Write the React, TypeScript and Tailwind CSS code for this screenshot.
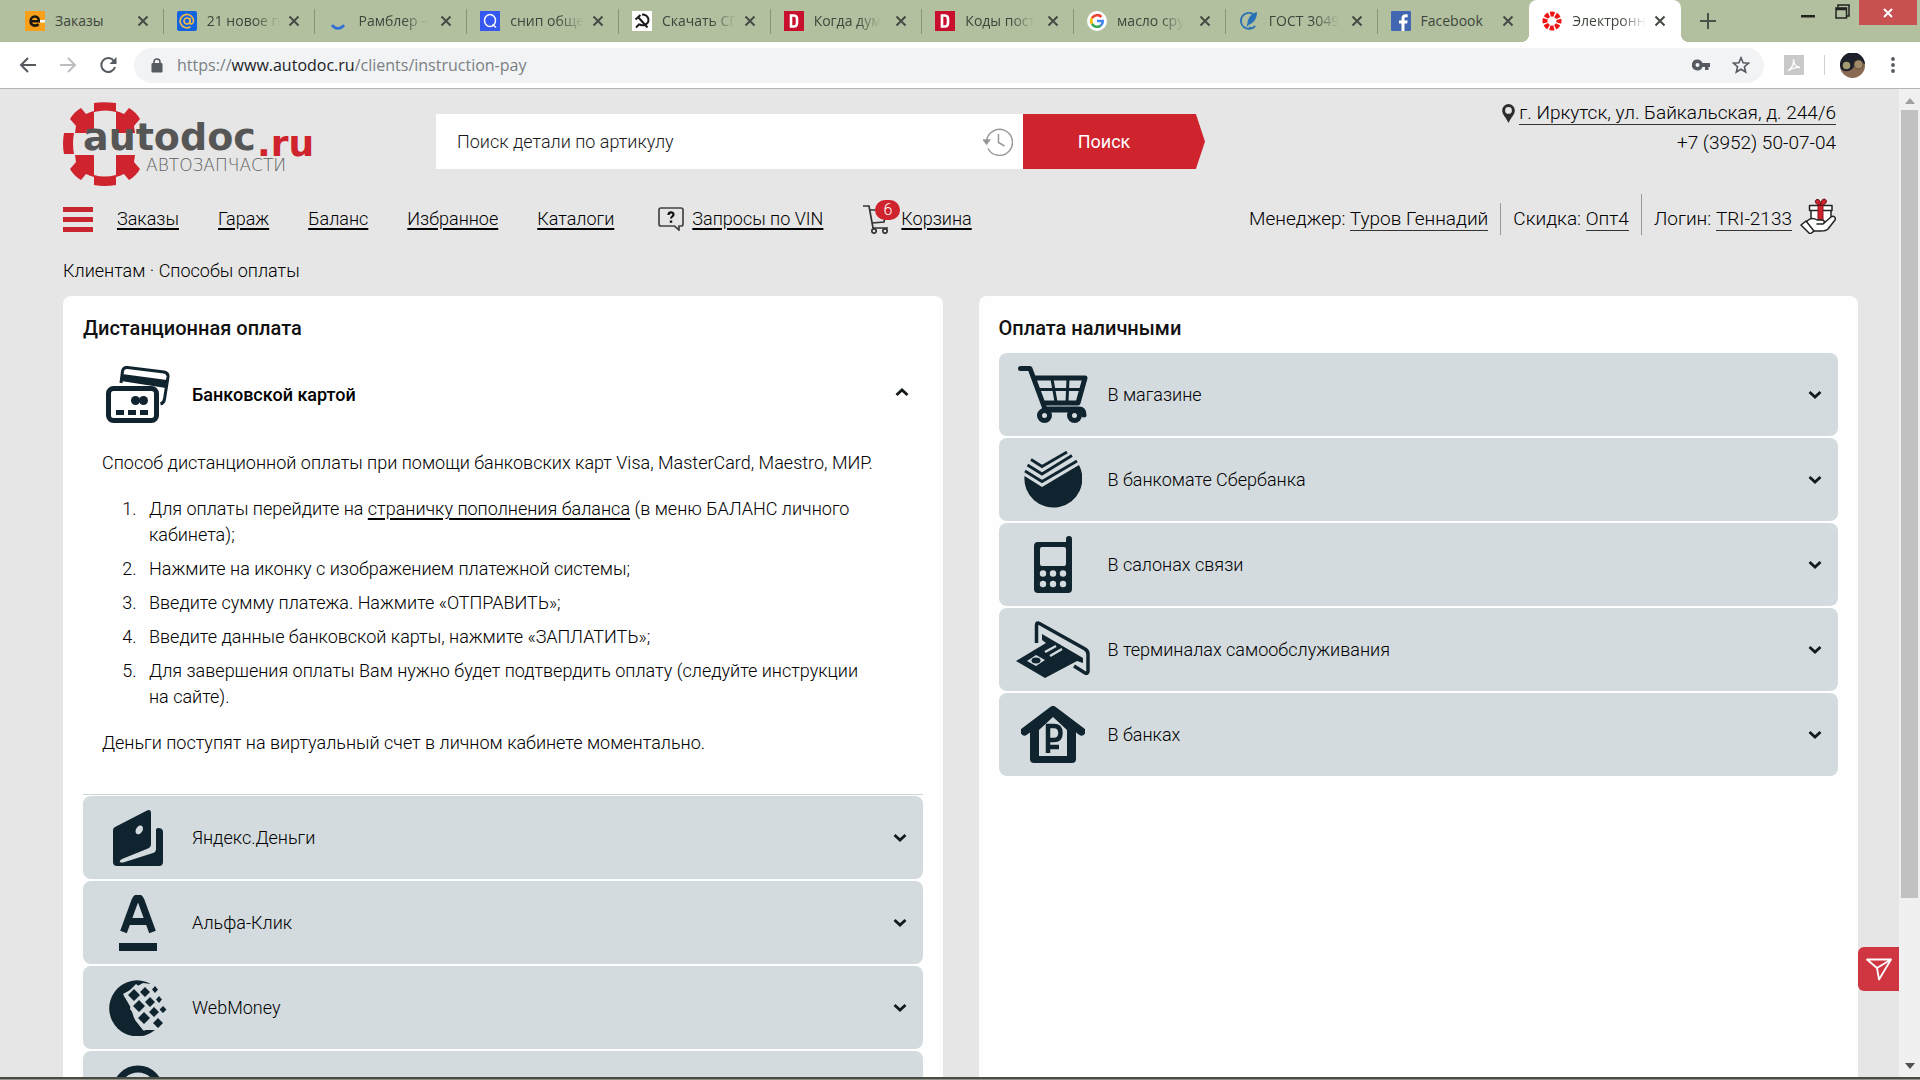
import { useState, type ReactNode } from "react";

const INK = "#10242f";

/* ---------- browser chrome ---------- */

function AutodocFavicon() {
  return (
    <svg viewBox="0 0 20 20" className="size-5">
      <circle cx="10" cy="10" r="7" fill="none" stroke="#f01414" strokeWidth="5" strokeDasharray="4.1 1.4" strokeDashoffset="2" />
    </svg>
  );
}

const favicons: Record<string, ReactNode> = {
  e: (
    <svg viewBox="0 0 20 20" className="size-5">
      <rect width="20" height="20" fill="#f9a01b" />
      <path d="M5.500 10.300h8.300c.2-3-1.500-4.800-3.900-4.800-2.500 0-4.300 1.900-4.300 4.600 0 2.900 1.800 4.500 4.400 4.500 1.500 0 2.700-.5 3.500-1.500" fill="none" stroke="#1c1a10" strokeWidth="2.600" />
      <rect x="15" y="9" width="5" height="2.500" fill="#fff" />
    </svg>
  ),
  mail: (
    <svg viewBox="0 0 20 20" className="size-5">
      <rect width="20" height="20" rx="2" fill="#1263e0" />
      <g fill="none" stroke="#e9b64c" strokeWidth="1.700">
        <circle cx="10" cy="10" r="3" />
        <path d="M13 7v4.500c0 2.200 3.500 2 3.500-1.500A6.700 6.700 0 1 0 13.500 15.700" />
      </g>
    </svg>
  ),
  spinner: (
    <svg viewBox="0 0 20 20" className="size-5">
      <path d="M4 14c3 4.500 9 4.500 12 0" fill="none" stroke="#2f6fd6" strokeWidth="2.500" />
    </svg>
  ),
  search: (
    <svg viewBox="0 0 20 20" className="size-5">
      <rect width="20" height="20" fill="#3558f0" />
      <ellipse cx="10" cy="9.500" rx="5.500" ry="6" fill="none" stroke="#fff" strokeWidth="1.500" />
      <path d="M12.500 13.500l3.500 3" stroke="#fff" strokeWidth="1.500" />
    </svg>
  ),
  hammer: (
    <svg viewBox="0 0 20 20" className="size-5">
      <rect width="20" height="20" fill="#fff" />
      <path d="M10 3.500c7 0 8.500 7.500 3.500 10-2.500 1.300-5 .8-6.500-.5M4 16.500l3.500-3.500M3.500 8.500l5-4.500M6.500 6.500l9 10" fill="none" stroke="#1b1b1b" strokeWidth="2" />
    </svg>
  ),
  d: (
    <svg viewBox="0 0 20 20" className="size-5">
      <rect width="20" height="20" fill="#c8102e" />
      <path d="M7 4.500h3c2.500 0 3 1.500 3 3.500v4c0 2-.5 3.500-3 3.500H7z" fill="none" stroke="#fff" strokeWidth="2.600" />
    </svg>
  ),
  google: (
    <svg viewBox="0 0 20 20" className="size-5">
      <circle cx="10" cy="10" r="10" fill="#fff" />
      <g fill="none" strokeWidth="2.600">
        <path d="M14.400 6A5.800 5.800 0 0 0 5 7.200" stroke="#ea4335" />
        <path d="M5 7.200a5.800 5.800 0 0 0 0 5.600" stroke="#fbbc05" />
        <path d="M5 12.800a5.800 5.800 0 0 0 8.800 1.600" stroke="#34a853" />
        <path d="M13.800 14.400A5.800 5.800 0 0 0 15.800 10H10" stroke="#4285f4" />
      </g>
    </svg>
  ),
  quill: (
    <svg viewBox="0 0 20 20" className="size-5">
      <path d="M16 15A8 8 0 1 1 14 3" fill="none" stroke="#2a72b5" strokeWidth="1.800" />
      <path d="M18 1C13 2 9 6 8.500 12l-1 4 3.500-3c4-1 7-6 7-12z" fill="#2a72b5" />
      <path d="M10 16c3 2 5 1 6-1" fill="none" stroke="#2a72b5" strokeWidth="1.500" />
    </svg>
  ),
  facebook: (
    <svg viewBox="0 0 20 20" className="size-5">
      <rect width="20" height="20" rx="1" fill="#4267b2" />
      <path d="M13.500 20v-7.500h2.700l.4-3h-3.100V7.700c0-.9.400-1.500 1.600-1.500h1.600V3.400c-3.500-.6-6.200.3-6.200 3.900v2.200H8v3h2.500V20z" fill="#fff" />
    </svg>
  ),
  autodoc: <AutodocFavicon />,
};

const tabs = [
  { icon: "e", title: "Заказы" },
  { icon: "mail", title: "21 новое п" },
  { icon: "spinner", title: "Рамблер –" },
  { icon: "search", title: "снип обще" },
  { icon: "hammer", title: "Скачать СГ" },
  { icon: "d", title: "Когда дум" },
  { icon: "d", title: "Коды пост" },
  { icon: "google", title: "масло сру" },
  { icon: "quill", title: "ГОСТ 3049" },
  { icon: "facebook", title: "Facebook" },
  { icon: "autodoc", title: "Электронн" },
];

function Cross() {
  return (
    <svg viewBox="0 0 12 12" className="size-3">
      <path d="M1.500 1.500l9 9M10.500 1.500l-9 9" stroke="#454a45" strokeWidth="2" />
    </svg>
  );
}

function TabStrip() {
  return (
    <div className="flex h-[42px] shrink-0 bg-[#b2c09f] font-['Open_Sans',sans-serif]">
      <div className="grid min-w-0 flex-1 grid-cols-11 pl-3">
        {tabs.map((tab, i) => {
          const active = i === tabs.length - 1;
          return (
            <div
              key={i}
              className={
                active
                  ? "relative flex min-w-0 items-center rounded-t-lg bg-white pl-[13px]"
                  : "flex min-w-0 items-center pl-[13px]"
              }
            >
              {active && (
                <>
                  <span className="absolute bottom-0 -left-2 size-2 bg-[radial-gradient(circle_at_0_0,transparent_8px,white_8px)]" />
                  <span className="absolute -right-2 bottom-0 size-2 bg-[radial-gradient(circle_at_100%_0,transparent_8px,white_8px)]" />
                </>
              )}
              <span className="shrink-0">{favicons[tab.icon]}</span>
              <span
                className={
                  tab.title.length > 8
                    ? "ml-2.5 max-w-20 shrink-0 mask-r-from-65% mask-r-to-100% text-sm whitespace-nowrap text-[#3e453c]"
                    : "ml-2.5 shrink-0 text-sm whitespace-nowrap text-[#3e453c]"
                }
              >
                {tab.title}
              </span>
              <button type="button" aria-label={"Закрыть " + tab.title} className="mr-3.5 ml-auto shrink-0">
                <Cross />
              </button>
              <span className={i >= tabs.length - 2 ? "w-px shrink-0" : "h-[25px] w-px shrink-0 bg-[#87927b]"} />
            </div>
          );
        })}
      </div>
      <div className="flex w-[239px] shrink-0 items-start justify-between pr-[3px] pl-[19px]">
        <button type="button" aria-label="Новая вкладка" className="mt-[13px]">
          <svg viewBox="0 0 16 16" className="size-4">
            <path d="M8 0v16M0 8h16" stroke="#4a5147" strokeWidth="2" />
          </svg>
        </button>
        <div className="flex items-start">
          <button type="button" aria-label="Свернуть" className="mt-[15px] mr-5">
            <svg viewBox="0 0 14 3" className="h-[3px] w-3.5">
              <rect width="14" height="2.500" fill="#222" />
            </svg>
          </button>
          <button type="button" aria-label="Развернуть" className="mt-1 mr-[9px]">
            <svg viewBox="0 0 15 15" className="size-[15px]">
              <path d="M3 3V1h11v11h-2" fill="none" stroke="#222" strokeWidth="1.500" />
              <rect x="1" y="4" width="10.500" height="10" fill="none" stroke="#222" strokeWidth="1.500" />
              <path d="M1 5h10.500" stroke="#222" strokeWidth="2.500" />
            </svg>
          </button>
          <button type="button" aria-label="Закрыть окно" className="flex h-[25px] w-[58px] items-center justify-center bg-[#c75050]">
            <svg viewBox="0 0 10 10" className="size-2.5">
              <path d="M1 1l8 8M9 1L1 9" stroke="#fff" strokeWidth="2" />
            </svg>
          </button>
        </div>
      </div>
    </div>
  );
}

function Toolbar() {
  return (
    <div className="flex h-[47px] shrink-0 items-center border-b border-[#b4b4b4] bg-white pr-[25px] pl-[19px] font-['Open_Sans',sans-serif]">
      <button type="button" aria-label="Назад">
        <svg viewBox="0 0 18 18" className="size-[18px]" fill="none" stroke="#555a60" strokeWidth="2">
          <path d="M17 9H2M9 2L2 9l7 7" />
        </svg>
      </button>
      <button type="button" aria-label="Вперёд" className="ml-[22px]">
        <svg viewBox="0 0 18 18" className="size-[18px]" fill="none" stroke="#bcbec1" strokeWidth="2">
          <path d="M1 9h15M9 2l7 7-7 7" />
        </svg>
      </button>
      <button type="button" aria-label="Обновить" className="ml-[22px]">
        <svg viewBox="0 0 18 18" className="size-[18px]">
          <path d="M15 5A7 7 0 1 0 16 11" fill="none" stroke="#555a60" strokeWidth="2" />
          <path d="M17.500 1v7h-7z" fill="#555a60" />
        </svg>
      </button>
      <div className="ml-[17px] flex h-[35px] min-w-0 flex-1 items-center rounded-full bg-[#f1f3f4] pr-3.5 pl-[17px]">
        <svg viewBox="0 0 12 15" className="h-[15px] w-3">
          <rect x="0.500" y="5" width="11" height="9.500" rx="1.200" fill="#555a60" />
          <path d="M3 6V4a3 3 0 0 1 6 0v2" fill="none" stroke="#555a60" strokeWidth="1.600" />
        </svg>
        <div className="ml-3.5 flex-1 text-base whitespace-nowrap text-[#7a7f84]">
          https://<span className="text-[#202124]">www.autodoc.ru</span>/clients/instruction-pay
        </div>
        <svg viewBox="0 0 18 12" className="h-3 w-[18px]" fill="#555a60">
          <path fillRule="evenodd" d="M5.500 0.500a5.500 5.500 0 1 0 5 7.500H13v3h3.500V8H18V4h-7.500a5.500 5.500 0 0 0-5-3.500zM5.500 4a2 2 0 1 1 0 4 2 2 0 0 1 0-4z" />
        </svg>
        <button type="button" aria-label="Добавить в закладки" className="ml-[22px]">
          <svg viewBox="0 0 18 18" className="size-[18px]">
            <path d="M9 1.800l2.100 5 5.400.4-4.100 3.500 1.300 5.300L9 13.200 4.300 16l1.300-5.300L1.500 7.200l5.400-.4z" fill="none" stroke="#555a60" strokeWidth="1.600" />
          </svg>
        </button>
      </div>
      <svg viewBox="0 0 20 20" className="ml-5 size-5">
        <rect width="20" height="20" fill="#c9c9c9" />
        <path d="M4 16c4-3 6-8 5.500-12 0 5 2.500 8 6.500 8.500-4.500-.5-8 .5-12 3.500z" fill="none" stroke="#fff" strokeWidth="1.300" />
      </svg>
      <span className="ml-5 h-5 w-px bg-[#d0d0d0]" />
      <svg viewBox="0 0 25 25" className="ml-[15px] size-[25px]">
        <circle cx="12.500" cy="12.500" r="12.500" fill="#8a6a50" />
        <path d="M0 12.500A12.500 12.500 0 0 1 25 11C17 7 15 12 13 15s-8 5-12 1z" fill="#1d1f2a" />
        <circle cx="6.500" cy="12.500" r="3.800" fill="#a39a70" />
        <circle cx="18.500" cy="11.500" r="4.500" fill="#a08a68" stroke="#4d4031" strokeWidth="0.800" />
      </svg>
      <button type="button" aria-label="Меню браузера" className="ml-[26px]">
        <svg viewBox="0 0 4 16" className="h-4 w-1" fill="#555a60">
          <circle cx="2" cy="2" r="1.900" />
          <circle cx="2" cy="8" r="1.900" />
          <circle cx="2" cy="14" r="1.900" />
        </svg>
      </button>
    </div>
  );
}

/* ---------- site header ---------- */

function Logo() {
  return (
    <a href="#home" aria-label="autodoc.ru" className="block shrink-0">
      <svg viewBox="0 0 254 84" className="h-[84px] w-[254px]">
        <g fill="#cf232e">
          <path d="M31 1q8-1.500 22 0v9q-10-3-22 0z" />
          <path d="M31 83q10 2 22 0v-10q-12 3-22 0z" />
          <path d="M1 31h10q-2 10 0 21H1q-2-10 0-21z" />
          <path d="M31 9v22H12l1-7-6-7Q11 10 18 6l5 6q4-2 8-3z" />
          <path d="M53 9v22h19l-1-7 6-7Q73 10 66 6l-5 6q-4-2-8-3z" />
          <path d="M31 75V53H12l1 7-6 7q4 7 11 11l5-6q4 2 8 3z" />
          <path d="M53 75V53h19l-1 7 6 7q-4 7-11 11l-5-6q-4 2-8 3z" />
        </g>
        <text x="20" y="48" fontFamily="DejaVu Sans" fontWeight="700" fontSize="38" fill="#565656">
          autodoc
        </text>
        <text x="194" y="54" fontFamily="DejaVu Sans" fontWeight="700" fontSize="36" fill="#cf232e">
          .ru
        </text>
        <text x="83" y="69" fontFamily="DejaVu Sans" fontSize="17" fill="#5f5f5f">
          АВТОЗАПЧАСТИ
        </text>
      </svg>
    </a>
  );
}

function HistoryIcon() {
  return (
    <svg viewBox="0 0 30 28" className="h-7 w-[30px]" fill="none" stroke="#9a9a9a" strokeWidth="1.500">
      <path d="M3.500 13.500A13 13 0 1 1 5 20.500" />
      <path d="M0.500 12l3 4 3-4z" fill="#888" />
      <path d="M15.500 6v8.500l6 3.500" />
    </svg>
  );
}

const navClass = "underline decoration-2 underline-offset-3";

function NavBar() {
  return (
    <nav className="flex items-center">
      <button type="button" aria-label="Меню" className="flex w-[30px] flex-col gap-[5px]">
        <span className="h-[5px] w-full bg-[#c9252f]" />
        <span className="h-[5px] w-full bg-[#c9252f]" />
        <span className="h-[5px] w-full bg-[#c9252f]" />
      </button>
      <div className="ml-6 flex gap-[39px]">
        {["Заказы", "Гараж", "Баланс", "Избранное", "Каталоги"].map((t) => (
          <a key={t} href="#nav" className={navClass}>
            {t}
          </a>
        ))}
      </div>
      <a href="#vin" className="ml-11 flex items-center gap-2">
        <svg viewBox="0 0 26 24" className="h-6 w-[26px]" fill="none" stroke="#444" strokeWidth="1.700">
          <path d="M3 1h20q2 0 2 2v14q0 2-2 2h-2v4l-4.500-4H3q-2 0-2-2V3q0-2 2-2z" />
          <path d="M10.500 8c0-3.500 5-3.500 5-.5 0 2-2.500 2-2.500 4" stroke="#111" strokeWidth="2.200" />
          <path d="M13 13.500v2.300" stroke="#111" strokeWidth="2.400" />
        </svg>
        <span className={navClass}>Запросы по VIN</span>
      </a>
      <a href="#cart" className="ml-10 flex items-center">
        <span className="relative mr-3 block">
          <svg viewBox="0 0 26 30" className="h-[30px] w-[26px]" fill="none" stroke="#333" strokeWidth="1.700">
            <path d="M0 2h6l4 22h15M7 6h16l-2 12-12 1" />
            <circle cx="11" cy="27" r="2.200" />
            <circle cx="22" cy="27" r="2.200" />
          </svg>
          <span className="absolute -top-1 left-3 flex h-5 w-[25px] items-center justify-center rounded-full bg-[#cf232e] text-base leading-none text-white">
            6
          </span>
        </span>
        <span className={navClass}>Корзина</span>
      </a>
    </nav>
  );
}

function AccountBar() {
  const link = "border-b border-[#333]";
  return (
    <div className="flex items-end text-[19px]">
      <div className="flex h-8 items-center pr-3">
        <span>
          Менеджер: <a href="#manager" className={link}>Туров Геннадий</a>
        </span>
      </div>
      <div className="flex h-8 items-center border-l border-[#999] px-3">
        <span>
          Скидка: <a href="#discount" className={link}>Опт4</a>
        </span>
      </div>
      <div className="flex h-[41px] items-end border-l border-[#999] pl-3">
        <div className="flex h-8 items-center">
          <span>
            Логин: <a href="#login" className={link}>TRI-2133</a>
          </span>
          <svg viewBox="0 0 36 36" className="mb-1.5 ml-2 size-9" stroke="#222" strokeWidth="1.500" strokeLinejoin="round">
            <rect x="11" y="12" width="20" height="12" fill="#fff" />
            <rect x="9.500" y="7.500" width="22.500" height="5" fill="#fff" />
            <path d="M18 7.500h5V24h-5z" fill="#cf232e" stroke="#8b1620" strokeWidth="1" />
            <path d="M20.500 7.500C15 7 14 2 17 1.500s3.500 3 3.500 6C20.500 3 23 0 25.500 1.500s0 6-5 6z" fill="#cf232e" stroke="#5b1016" strokeWidth="1" />
            <path d="M7 23c3-3 7-3 10-1h5c3 0 3 4 0 4h-5 6l8-7c3-2 5 1 4 3l-7 9c-2 2-4 2-7 2h-7l-2 1-6-9z" fill="#fff" />
            <path d="M1 27l5-4 8 10-4 3z" fill="#fff" />
          </svg>
        </div>
      </div>
    </div>
  );
}

function SiteHeader() {
  return (
    <header className="pr-[22px]">
      <div className="flex h-[102px] items-start pt-[13px]">
        <Logo />
        <form className="mt-3 ml-[119px] flex h-[55px] w-[769px]" onSubmit={(e) => e.preventDefault()}>
          <div className="flex min-w-0 flex-1 items-center bg-white pr-2.5 pl-[21px]">
            <input
              aria-label="Поиск детали по артикулу"
              placeholder="Поиск детали по артикулу"
              className="min-w-0 flex-1 outline-none placeholder:text-[#1a1a1a] placeholder:opacity-100"
            />
            <HistoryIcon />
          </div>
          <button
            type="submit"
            className="w-[182px] bg-[#cf232e] pr-5 font-normal text-white [clip-path:polygon(0_0,95%_0,100%_50%,95%_100%,0_100%)]"
          >
            Поиск
          </button>
        </form>
        <div className="ml-auto text-right text-[19px]">
          <a href="#address" className="flex items-center">
            <svg viewBox="0 0 13 19" className="mr-1 h-[19px] w-[13px]">
              <path fillRule="evenodd" d="M6.500 0a6.300 6.300 0 0 1 6.300 6.500C12.800 11 9 13 6.500 19 4 13 .2 11 .2 6.500A6.300 6.300 0 0 1 6.500 0zm0 3a3.400 3.400 0 1 0 0 6.800 3.400 3.400 0 0 0 0-6.800z" fill="#2d2d2d" />
            </svg>
            <span className="border-b border-[#333] leading-[22px]">г. Иркутск, ул. Байкальская, д. 244/6</span>
          </a>
          <div className="mt-1 leading-7">+7 (3952) 50-07-04</div>
        </div>
      </div>
      <div className="mt-[3px] flex items-end justify-between">
        <div className="pb-px">
          <NavBar />
        </div>
        <AccountBar />
      </div>
    </header>
  );
}

/* ---------- payment icons ---------- */

const icons: Record<string, ReactNode> = {
  card: (
    <svg viewBox="0 0 64 57" className="h-[57px] w-16" fill="none" stroke={INK}>
      <path d="M15 17l1.500-12q1-4 5-3.500L58 6q4.500 1 4 5l-3.500 22q-.5 4-4 5" strokeWidth="3" />
      <path d="M16 8l45 6-1 8-45-7z" fill={INK} stroke="none" />
      <rect x="2.500" y="22.500" width="48" height="32" rx="5" strokeWidth="5" />
      <g fill={INK} stroke="none">
        <circle cx="29.500" cy="34.500" r="4.500" />
        <circle cx="37.500" cy="34.500" r="4.500" />
        <rect x="10" y="44" width="8" height="5" />
        <rect x="22" y="44" width="8" height="5" />
        <rect x="34" y="44" width="8" height="5" />
      </g>
    </svg>
  ),
  wallet: (
    <svg viewBox="0 0 50 56" className="h-14 w-[50px]" fill={INK}>
      <path fillRule="evenodd" d="M0 20q0-2 2-3L34 .5Q38-1 38 3v31q0 3-3 4.500L9 49q-3 1.500-2 3 1 1 4 .3L40 43q3-1 3-4V19.500q0-1.500 2-1.500 5 0 5 4v30q0 4-4 4H4q-4 0-4-4zM24 24c2.500 1.500 6-2.500 6-5.500s-3-4-5.500-1.500-2.500 6-.5 7z" />
    </svg>
  ),
  alfa: (
    <svg viewBox="0 0 38 56" className="h-14 w-[38px]">
      <path d="M4.500 37L16 5.500q3-6 6 0L33.500 37M9 26.500h20" fill="none" stroke={INK} strokeWidth="7" strokeLinejoin="round" />
      <rect y="48" width="38" height="8" fill={INK} />
    </svg>
  ),
  webmoney: (
    <svg viewBox="0 0 58 56" className="h-14 w-[58px]">
      <path d="M42 4L34 3 14 14l8 14 3 10 9 12 12 0A28 28 0 1 1 42 4z" fill={INK} />
      <path d="M27 4L15 16l7 9-1 4 6 8-1 3 9 11 12-11-5-9 2-4-6-9 1-5z" fill="#d3dbde" />
      <g fill={INK}>
        <path d="M25 9l6 6-6 6-6-6zM30 20l6 6-6 6-6-6zM35 32l6 6-6 6-6-6z" />
        <path d="M36 7l5 5-5 5-5-5zM41 17l5 5-5 5-5-5zM45 27l5 5-5 5-5-5zM49 38l5 5-5 5-5-5z" />
        <path d="M46 6l3 3.500-3 3.500-3-3.500zM50 16l3 3.500-3 3.500-3-3.500zM54 26l3.500 3.500-3.500 3.500-3.500-3.500z" />
      </g>
    </svg>
  ),
  qiwi: (
    <svg viewBox="0 0 56 56" className="size-14">
      <circle cx="28" cy="26" r="22" fill="none" stroke={INK} strokeWidth="7" />
      <path d="M34 38l12 16" stroke={INK} strokeWidth="7" />
    </svg>
  ),
  cart: (
    <svg viewBox="0 0 70 57" className="h-[57px] w-[70px]" fill="none" stroke={INK} strokeLinecap="round" strokeLinejoin="round">
      <path d="M2.500 2.500H12L27 43M16 12h51l-7 25H26M27 43h34q5 0 5 6M26 44h32" strokeWidth="5" />
      <path d="M20 23.500h43M34 13l4 23M50 13l-1 23" strokeWidth="3" />
      <circle cx="26.500" cy="49.500" r="5" strokeWidth="5" />
      <circle cx="56.500" cy="49.500" r="5" strokeWidth="5" />
    </svg>
  ),
  sber: (
    <svg viewBox="0 0 58 57" className="h-[57px] w-[58px]">
      <path d="M.5 25L18 36 55 14A29 29 0 1 1 .5 25z" fill={INK} />
      <path d="M1 20l17 10.500L53 10M3.500 14L18 23 48 4.500M7 8.500l11 7L43 1" fill="none" stroke={INK} strokeWidth="2.800" />
    </svg>
  ),
  phone: (
    <svg viewBox="0 0 38 57" className="h-[57px] w-[38px]" fill={INK}>
      <path fillRule="evenodd" d="M32 3q0-3 3-3t3 3v50q0 4-4 4H4q-4 0-4-4V10q0-4 4-4h28zM8 11q-2 0-2 2v15q0 2 2 2h22q2 0 2-2V13q0-2-2-2z" />
      <g fill="#d3dbde">
        <circle cx="9" cy="37.500" r="3.200" />
        <circle cx="19" cy="37.500" r="3.200" />
        <circle cx="29" cy="37.500" r="3.200" />
        <circle cx="9" cy="48" r="3.200" />
        <circle cx="19" cy="48" r="3.200" />
        <circle cx="29" cy="48" r="3.200" />
      </g>
    </svg>
  ),
  terminal: (
    <svg viewBox="0 0 74 57" className="h-[57px] w-[74px]">
      <path d="M20.500 22V4q0-3 3-1.500L69 28q3 2 3 5v17q0 3-3 2L58 45" fill="none" stroke={INK} strokeWidth="3.500" />
      <path d="M0 40l30-18-4-3v-6l41 24v5l-6-2-32 17z" fill={INK} />
      <path d="M11 40l9-6 9 5-9 6z" fill="#d3dbde" />
      <ellipse cx="20" cy="39.500" rx="4.500" ry="3" fill={INK} />
      <path d="M29 31l11-6M34 35l12-7" stroke="#d3dbde" strokeWidth="2.500" />
    </svg>
  ),
  bank: (
    <svg viewBox="0 0 64 57" className="h-[57px] w-16">
      <path d="M3.500 25.500L32 4l28.500 21.500" fill="none" stroke={INK} strokeWidth="8" strokeLinecap="round" strokeLinejoin="round" />
      <path fillRule="evenodd" d="M9 22L32 5l23 17v31q0 4-4 4H13q-4 0-4-4zM18 24v26h28V24L32 11z" fill={INK} />
      <path d="M27 47V20h6q6.500 0 6.500 7t-6.500 7h-6M25 41h13" fill="none" stroke={INK} strokeWidth="4.500" />
    </svg>
  ),
};

function Chevron({ up = false }: { up?: boolean }) {
  return (
    <svg viewBox="0 0 14 10" className="h-2.5 w-3.5" fill="none" stroke="#151a1d" strokeWidth="2.800">
      <path d={up ? "M1.500 8L7 3l5.500 5" : "M1.500 2L7 7l5.500-5"} />
    </svg>
  );
}

function Method({ icon, label }: { icon: string; label: string }) {
  return (
    <button type="button" aria-expanded={false} className="flex h-[83px] w-full shrink-0 items-center rounded-lg bg-[#d3dbde] pr-4 text-left">
      <span className="flex w-[109px] shrink-0 justify-center">{icons[icon]}</span>
      <span className="flex-1">{label}</span>
      <Chevron />
    </button>
  );
}

function CardInstructions() {
  return (
    <div className="border-b border-[#cfd6d9] pr-5 pb-[38px] pl-[19px] leading-[26px]">
      <p className="whitespace-nowrap">Способ дистанционной оплаты при помощи банковских карт Visa, MasterCard, Maestro, МИР.</p>
      <ol className="mt-5 flex list-decimal flex-col gap-2 pl-[39px] *:pl-2">
        <li>
          Для оплаты перейдите на{" "}
          <a href="#balance" className="underline decoration-2 underline-offset-3">страничку пополнения баланса</a> (в меню БАЛАНС личного
          <br />
          кабинета);
        </li>
        <li>Нажмите на иконку с изображением платежной системы;</li>
        <li>Введите сумму платежа. Нажмите «ОТПРАВИТЬ»;</li>
        <li>Введите данные банковской карты, нажмите «ЗАПЛАТИТЬ»;</li>
        <li>
          Для завершения оплаты Вам нужно будет подтвердить оплату (следуйте инструкции
          <br />
          на сайте).
        </li>
      </ol>
      <p className="mt-5">Деньги поступят на виртуальный счет в личном кабинете моментально.</p>
    </div>
  );
}

function Payments() {
  const [open, setOpen] = useState(true);
  return (
    <div className="mt-3 grid min-h-0 flex-1 grid-cols-2 gap-9">
      <section className="flex min-h-0 flex-col overflow-hidden rounded-t-lg bg-[#fefefe] px-5 pt-[18px]">
        <h2 className="text-xl leading-7 font-medium text-[#111]">Дистанционная оплата</h2>
        <button type="button" aria-expanded={open} onClick={() => setOpen(!open)} className="mt-[11px] flex h-[83px] w-full shrink-0 items-center pr-3.5 text-left">
          <span className="flex w-[109px] shrink-0 justify-center">{icons.card}</span>
          <span className="flex-1 font-medium">Банковской картой</span>
          <span className="-mt-1.5">
            <Chevron up={open} />
          </span>
        </button>
        <div className="pt-3.5">{open && <CardInstructions />}</div>
        <div className="mt-px flex flex-col gap-0.5">
          <Method icon="wallet" label="Яндекс.Деньги" />
          <Method icon="alfa" label="Альфа-Клик" />
          <Method icon="webmoney" label="WebMoney" />
          <Method icon="qiwi" label="QIWI" />
        </div>
      </section>
      <section className="min-h-0 overflow-hidden rounded-t-lg bg-[#fefefe] px-5 pt-[18px]">
        <h2 className="text-xl leading-7 font-medium text-[#111]">Оплата наличными</h2>
        <div className="mt-[11px] flex flex-col gap-0.5">
          <Method icon="cart" label="В магазине" />
          <Method icon="sber" label="В банкомате Сбербанка" />
          <Method icon="phone" label="В салонах связи" />
          <Method icon="terminal" label="В терминалах самообслуживания" />
          <Method icon="bank" label="В банках" />
        </div>
      </section>
    </div>
  );
}

function Scrollbar() {
  return (
    <div className="flex w-[21px] shrink-0 flex-col items-center bg-[#f0f0f0] pt-[9px] pb-2">
      <svg viewBox="0 0 10 6" className="h-1.5 w-2.5 shrink-0">
        <path d="M0 6l5-6 5 6z" fill="#a0a0a0" />
      </svg>
      <div className="mt-1.5 w-[17px] flex-[81] bg-[#c1c1c1]" />
      <div className="flex-[17]" />
      <svg viewBox="0 0 10 6" className="h-1.5 w-2.5 shrink-0">
        <path d="M0 0l5 6 5-6z" fill="#505050" />
      </svg>
    </div>
  );
}

export default function App() {
  return (
    <div className="flex h-screen flex-col overflow-hidden bg-[#e6e6e6]">
      <TabStrip />
      <Toolbar />
      <div className="relative flex min-h-0 flex-1">
        <main className="flex min-w-0 flex-1 flex-col pr-[41px] pl-[63px] font-['Roboto',sans-serif] text-lg leading-6 font-light text-black">
          <SiteHeader />
          <div className="mt-[23px] leading-[26px]">
            <a href="#clients">Клиентам</a> · <span>Способы оплаты</span>
          </div>
          <Payments />
        </main>
        <button type="button" aria-label="Написать нам" className="absolute right-[21px] bottom-[86px] flex h-11 w-[41px] items-center justify-center rounded-l-md bg-[#cf3641]">
          <svg viewBox="0 0 26 23" className="h-[23px] w-[26px]" fill="none" stroke="#fff" strokeWidth="1.800" strokeLinejoin="round">
            <path d="M1 1.500h24L13 21.500l-2-11.500zM11 10L25 1.500" />
          </svg>
        </button>
        <Scrollbar />
      </div>
      <div className="h-[3px] shrink-0 border-t-2 border-[#4a4b42] bg-[#8f9289]" />
    </div>
  );
}
